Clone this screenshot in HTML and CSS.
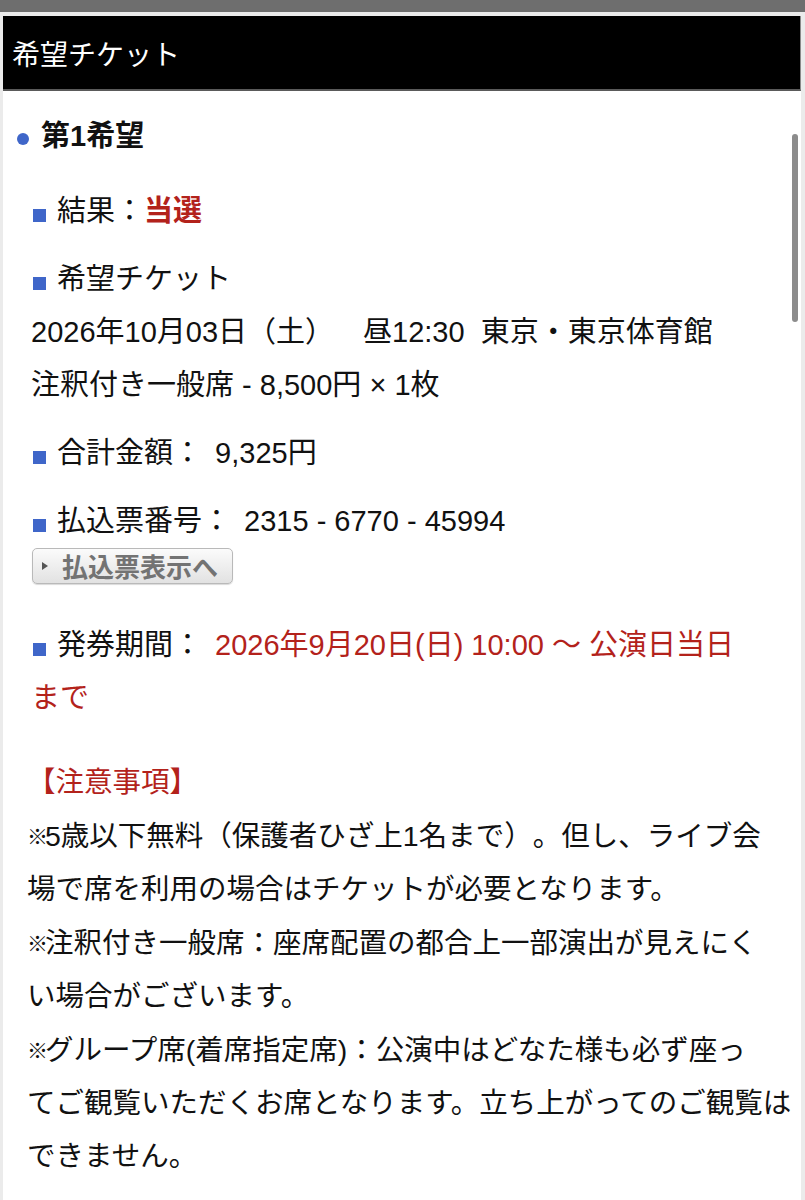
FILE: index.html
```html
<!DOCTYPE html>
<html lang="ja">
<head>
<meta charset="utf-8">
<title>希望チケット</title>
<link rel="stylesheet" href="styles.css">
</head>
<body>
<div class="topbar"></div>
<div class="page">
  <div class="header">希望チケット</div>
  <div class="content">
    <h2 class="choice"><span class="dot"></span>第1希望</h2>
    <div class="items">
      <p class="item"><span class="sq"></span>結果：<strong class="win">当選</strong></p>
      <p class="item"><span class="sq"></span>希望チケット<br>2026年10月03日（土）　昼12:30&nbsp;&nbsp;東京・東京体育館<br>注釈付き一般席 - 8,500円 × 1枚</p>
      <p class="item"><span class="sq"></span><span class="label">合計金額：</span> 9,325円</p>
      <p class="item tight"><span class="sq"></span><span class="label">払込票番号：</span> 2315 - 6770 - 45994</p>
      <button class="btn" type="button"><span class="tri"></span>払込票表示へ</button>
      <p class="item period"><span class="sq"></span><span class="label">発券期間：</span> <span class="red">2026年9月20日(日) 10:00 〜 公演日当日まで</span></p>
    </div>
    <div class="notes">
      <div class="notes-title">【注意事項】</div>
      <div class="note"><span class="kome">※</span>5歳以下無料（保護者ひざ上1名まで）。但し、ライブ会<br>場で席を利用の場合はチケットが必要となります。</div>
      <div class="note"><span class="kome">※</span>注釈付き一般席：座席配置の都合上一部演出が見えにく<br>い場合がございます。</div>
      <div class="note"><span class="kome">※</span>グループ席(着席指定席)：公演中はどなた様も必ず座っ<br>てご観覧いただくお席となります。立ち上がってのご観覧は<br>できません。</div>
    </div>
  </div>
  <div class="scrollbar"></div>
</div>
</body>
</html>
```

FILE: styles.css
```css
html, body {
  margin: 0;
  padding: 0;
}
body {
  background: #ebebeb;
  font-family: "Liberation Sans", "Noto Sans CJK JP", sans-serif;
  color: #111;
  text-spacing-trim: space-all;
}
.topbar {
  height: 12px;
  background: #6e6e6e;
}
.page {
  position: relative;
  margin: 4px 4px 0 3px;
  background: #fff;
  min-height: 1184px;
  overflow: hidden;
}
.header {
  height: 73px;
  background: #000;
  color: #fff;
  font-size: 28px;
  display: flex;
  align-items: center;
  padding-left: 9px;
  border-bottom: 2px solid #5a5a5a;
  border-right: 1px solid #8a8a8a;
}
.content {
  padding: 25px 0 40px 0;
}
.choice {
  margin: 0;
  padding-left: 14px;
  font-size: 29px;
  line-height: 40px;
  font-weight: bold;
  display: flex;
  align-items: center;
}
.dot {
  width: 12px;
  height: 12px;
  border-radius: 50%;
  background: #3f66c9;
  margin-right: 12px;
  margin-top: 6px;
}
.items {
  padding: 0 48px 0 28px;
  margin-top: 29px;
}
.item {
  margin: 0 0 15px;
  font-size: 29px;
  line-height: 53px;
}
.item.tight {
  margin-bottom: 0;
}
.item.period {
  margin-top: 35px;
  margin-bottom: 0;
}
.label {
  margin-right: 5px;
}
.sq {
  display: inline-block;
  width: 13px;
  height: 13px;
  background: #3f66c9;
  margin-left: 2px;
  margin-right: 11px;
  vertical-align: -1px;
}
.win {
  color: #b3221b;
  font-weight: bold;
}
.red {
  color: #b3221b;
}
.btn {
  display: flex;
  align-items: center;
  width: 201px;
  height: 36px;
  margin: 0 0 0 1px;
  padding: 0 0 0 9px;
  border: 1px solid #b9b9b9;
  border-radius: 5px;
  background: linear-gradient(#fbfbfb, #e2e2e2);
  box-shadow: 0 1px 1px rgba(0,0,0,0.15);
  font-family: "Noto Sans CJK JP", sans-serif;
  font-size: 26px;
  font-weight: bold;
  color: #737373;
  line-height: 1;
}
.tri {
  width: 0;
  height: 0;
  border-top: 4px solid transparent;
  border-bottom: 4px solid transparent;
  border-left: 6px solid #555;
  margin-right: 14px;
}
.notes {
  padding-left: 24px;
  margin-top: 31px;
  font-size: 28.5px;
  line-height: 53px;
  white-space: nowrap;
}
.notes-title {
  color: #b3221b;
}
.kome {
  font-family: "Noto Sans CJK JP", sans-serif;
  font-size: 21px;
  letter-spacing: -3px;
  vertical-align: 2px;
}
.scrollbar {
  position: absolute;
  top: 118px;
  right: 3px;
  width: 6px;
  height: 188px;
  border-radius: 3px;
  background: #8c8c8c;
}
```
